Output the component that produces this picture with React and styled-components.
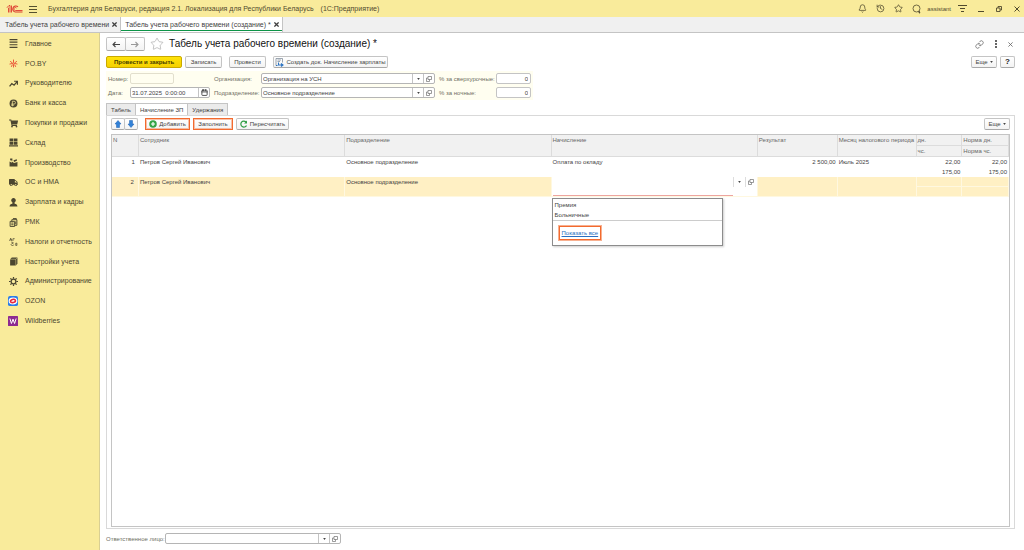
import React from "react";
import styled, { createGlobalStyle, css } from "styled-components";
import { Bell, History, Link, Star, Calendar } from "lucide-react";
import { FaShoppingCart, FaTruck } from "react-icons/fa";

const colors = {
  yellow: "#f9eb9b",
  form: "#fffef0",
  row: "#fff0c4",
  line: "#c4c4c4",
  text: "#3f3f3f",
  label: "#6f6f63",
  orange: "#f26a2e",
  green: "#0c9447",
};

const menu = [
  ["main", "Главное"],
  ["poby", "PO.BY"],
  ["trend", "Руководителю"],
  ["bank", "Банк и касса"],
  ["cart", "Покупки и продажи"],
  ["stock", "Склад"],
  ["factory", "Производство"],
  ["truck", "ОС и НМА"],
  ["person", "Зарплата и кадры"],
  ["rmk", "РМК"],
  ["tax", "Налоги и отчетность"],
  ["books", "Настройки учета"],
  ["gear", "Администрирование"],
  ["ozon", "OZON"],
  ["wb", "Wildberries"],
];

const shapes = {
  main: <path d="M1 0h14v2H1zM1 4.600h14v2H1zM1 9.200h14v2H1zM1 13.800h14v2H1z" />,
  poby: (
    <g stroke="#e8472f" strokeWidth="1.6" fill="none">
      <path d="M8 1v5M8 10v5M2 4l4 3M14 4l-4 3M1 9l5-1M15 9l-5-1M4 14l2-4M12 14l-2-4" />
      <circle cx="8" cy="8" r="1.5" />
    </g>
  ),
  trend: (
    <path
      d="M1 13l4-5 4 3 5-6M9 4h6v6"
      fill="none"
      stroke="currentColor"
      strokeWidth="2.2"
    />
  ),
  bank: (
    <>
      <circle cx="8" cy="8" r="7" />
      <path
        d="M6 13V4h3a2.3 2.3 0 0 1 0 5H4M4 11h5"
        stroke={colors.yellow}
        strokeWidth="1.3"
        fill="none"
      />
    </>
  ),
  stock: <path d="M1 1h6.500v5H1zM8.500 1H15v5H8.500zM1 7h6.500v5H1zM8.500 7H15v5H8.500zM0 13h16v2H0z" />,
  factory: <path d="M1 15V6l4 2.500V6l4 3 6-2v8zM2 1h4v4L2 4zM8 4l6-2v3l-5 2z" />,
  person: <path d="M8 0a4 4 0 0 1 2 7.500V10c3 0 5 2 5 5H1c0-3 2-5 5-5V7.500A4 4 0 0 1 8 0z" />,
  rmk: (
    <g fill="none" stroke="currentColor" strokeWidth="1.7">
      <path d="M2 6h8v9H2zM5 6V3h9v10h-4M7 1h6v2M4 9h4M4 12h4M12 6v5" />
    </g>
  ),
  tax: (
    <g fill="none" stroke="currentColor" strokeWidth="1.3">
      <path d="M1 7l2-5 2 5M2 5h3M7 7V3h3M8 13a2 2 0 1 0 0 1M12 15v-4h2v4h-2M4 9l4 1" />
    </g>
  ),
  books: (
    <>
      <path d="M2 4l3-3h10v11l-3 3H2z" />
      <path d="M2 4h10v11M12 4l3-3" fill="none" stroke={colors.yellow} strokeWidth=".8" />
    </>
  ),
  gear: (
    <g fill="none" stroke="currentColor">
      <circle cx="8" cy="8" r="4.200" strokeWidth="2.2" />
      <path
        d="M8 0v3M8 13v3M0 8h3M13 8h3M2.5 2.5l2 2M11.5 11.5l2 2M13.5 2.5l-2 2M2.5 13.5l2-2"
        strokeWidth="2.2"
      />
    </g>
  ),
  ozon: (
    <>
      <rect width="16" height="16" rx="3" fill="#2b7de9" />
      <ellipse cx="8" cy="8" rx="7" ry="5.5" fill="#fff" />
      <ellipse
        cx="8"
        cy="8"
        rx="4"
        ry="2.500"
        fill="#fff"
        stroke="#e8263c"
        strokeWidth="2.5"
        transform="rotate(-15 8 8)"
      />
    </>
  ),
  wb: (
    <>
      <rect width="16" height="16" rx="1" fill="#8d2a91" />
      <path d="M3 4l2.5 8L8 5l2.5 7L13 4" fill="none" stroke="#fff" strokeWidth="1.6" />
    </>
  ),
};

const MenuIcon = ({ name }) => {
  if (name === "cart") return <FaShoppingCart size={9} />;
  if (name === "truck") return <FaTruck size={9} />;
  const size = name === "ozon" || name === "wb" ? 10 : 9;
  return (
    <svg width={size} height={size} viewBox="0 0 16 16" fill="currentColor">
      {shapes[name]}
    </svg>
  );
};

const Logo = () => (
  <svg width="17" height="10" viewBox="0 0 34 20" fill="none" stroke="#dc3a2e" strokeWidth="2.2">
    <path d="M2 7l4-4h2v14M4 8v-1M11 3v14M5 17V8" strokeWidth="1.8" />
    <path d="M24 6a6 6 0 1 0-5 10h14" />
    <path d="M21 8a3 3 0 1 0-2 5h14" strokeWidth="1.8" />
  </svg>
);

const Burger = () => (
  <svg width="8" height="8" viewBox="0 0 8 8" stroke="#55502f">
    <path d="M0 1.5h8M0 4.5h8M0 7.5h8" />
  </svg>
);

const Loupe = () => (
  <svg width="10" height="10" viewBox="0 0 20 20" fill="none" stroke="currentColor" strokeWidth="1.6">
    <circle cx="9" cy="9" r="7" />
    <path d="M14 14l2 4h-2z" fill="currentColor" />
  </svg>
);

const Filter = () => (
  <svg width="9" height="9" viewBox="0 0 9 9" stroke="currentColor">
    <path d="M0 1.5h9M2 4.5h5M3 7.5h3" />
  </svg>
);

const Cross = ({ size = 5, thick = 1 }) => (
  <svg width={size} height={size} viewBox="0 0 6 6" stroke="currentColor" strokeWidth={thick}>
    <path d="M.5.5l5 5M5.5.5l-5 5" />
  </svg>
);

const Restore = () => (
  <svg width="6" height="6" viewBox="0 0 12 12" fill="none" stroke="currentColor" strokeWidth="1.8">
    <path d="M1 4h7v7H1zM4 4V1h7v7H8" />
  </svg>
);

const Arrow = ({ back }) => (
  <svg width="8" height="7" viewBox="0 0 16 14" fill="none" stroke="currentColor" strokeWidth="2.2">
    <path d={back ? "M16 7H2M7 2L2 7l5 5" : "M0 7h14M9 2l5 5-5 5"} />
  </svg>
);

const MoveArrow = ({ down }) => (
  <svg width="8" height="8" viewBox="0 0 16 16" fill="#3282d8" stroke="#1a5fb0">
    <path d={down ? "M8 15L2 8h3V1h6v7h3z" : "M8 1L2 8h3v7h6V8h3z"} />
  </svg>
);

const Plus = () => (
  <svg width="8" height="8" viewBox="0 0 16 16">
    <circle cx="8" cy="8" r="7.5" fill="#35a545" />
    <path d="M8 4v8M4 8h8" stroke="#fff" strokeWidth="2.4" />
  </svg>
);

const Refresh = () => (
  <svg width="8" height="8" viewBox="0 0 16 16" fill="none" stroke="#2f9e44" strokeWidth="2.4">
    <path d="M13 11a6 6 0 1 1-1-7" />
    <path d="M14 1v6H8z" fill="#2f9e44" stroke="none" />
  </svg>
);

const DocIcon = () => (
  <svg width="9" height="9" viewBox="0 0 18 18" fill="none" stroke="#71808f" strokeWidth="1.4">
    <path d="M2 15V1h13v8M5 4h7M5 7h5" />
    <path d="M2 15h3M7 9v5h8M12 11l4 3-4 3" stroke="#2b73c2" strokeWidth="2.2" />
  </svg>
);

const Open = () => (
  <svg width="6" height="6" viewBox="0 0 12 12" fill="none" stroke="#666" strokeWidth="1.3">
    <path d="M4 1h7v6H4zM4 4H1v7h6V7" />
  </svg>
);

const Caret = () => (
  <svg width="3" height="2" viewBox="0 0 4 3" fill="#444">
    <path d="M0 0h4L2 3z" />
  </svg>
);

const ComboField = ({ id, label, value = "" }) => (
  <>
    <Label htmlFor={id}>{label}</Label>
    <Combo>
      <input id={id} defaultValue={value} />
      <button type="button" aria-label="Выбрать">
        <Caret />
      </button>
      <button type="button" aria-label="Открыть">
        <Open />
      </button>
    </Combo>
  </>
);

const App = () => {
  return (
    <Page>
      <GlobalStyle />
      <TopBar>
        <Logo />
        <Burger />
        <AppTitle>
          Бухгалтерия для Беларуси, редакция 2.1. Локализация для Республики Беларусь
          <span>(1С:Предприятие)</span>
        </AppTitle>
        <Tools>
          <IconButton aria-label="Уведомления">
            <Bell size={9} />
          </IconButton>
          <IconButton aria-label="История">
            <History size={9} />
          </IconButton>
          <IconButton aria-label="Избранное">
            <Star size={9} />
          </IconButton>
          <IconButton aria-label="Поиск">
            <Loupe />
          </IconButton>
          <User>assistant</User>
          <IconButton aria-label="Настройки">
            <Filter />
          </IconButton>
        </Tools>
        <WindowButtons>
          <IconButton aria-label="Свернуть">
            <svg width="6" height="6" viewBox="0 0 6 6" stroke="currentColor">
              <path d="M0 5.5h6" />
            </svg>
          </IconButton>
          <IconButton aria-label="Восстановить">
            <Restore />
          </IconButton>
          <IconButton aria-label="Закрыть">
            <Cross size={6} />
          </IconButton>
        </WindowButtons>
      </TopBar>

      <WindowTabs>
        <WindowTab>
          Табель учета рабочего времени <Cross thick={1.5} />
        </WindowTab>
        <WindowTab $active>
          Табель учета рабочего времени (создание) * <Cross thick={1.5} />
        </WindowTab>
      </WindowTabs>

      <Body>
        <Sidebar>
          <MenuList>
            {menu.map(([icon, title]) => (
              <li key={icon}>
                <MenuLink href="#">
                  <MenuIcon name={icon} />
                  {title}
                </MenuLink>
              </li>
            ))}
          </MenuList>
        </Sidebar>

        <Main>
          <TitleRow>
            <Group>
              <Button aria-label="Назад" $width="20px" $tall>
                <Arrow back />
              </Button>
              <Button aria-label="Вперед" $width="20px" $tall $muted>
                <Arrow />
              </Button>
            </Group>
            <Star size={14} strokeWidth={1} color="#999" />
            <h1>Табель учета рабочего времени (создание) *</h1>
            <TitleTools>
              <Link size={9} />
              <svg width="2" height="8" viewBox="0 0 2 8" fill="currentColor">
                <path d="M0 0h2v2H0zM0 3h2v2H0zM0 6h2v2H0z" />
              </svg>
              <Cross size={5} />
            </TitleTools>
          </TitleRow>

          <CommandBar>
            <Button $primary $width="76px">
              Провести и закрыть
            </Button>
            <Button $width="37px">Записать</Button>
            <Gap />
            <Button $width="37px">Провести</Button>
            <Gap />
            <Button $width="115px">
              <DocIcon />
              Создать док. Начисление зарплаты
            </Button>
            <Spacer />
            <Button $width="26px">
              Еще <Caret />
            </Button>
            <Button $width="15px">
              <b>?</b>
            </Button>
          </CommandBar>

          <Form>
            <Label htmlFor="number">Номер:</Label>
            <NumberInput id="number" disabled />
            <ComboField id="org" label="Организация:" value="Организация на УСН" />
            <Label htmlFor="overtime">% за сверхурочные:</Label>
            <Input id="overtime" defaultValue="0" />
            <Label htmlFor="date">Дата:</Label>
            <Combo>
              <input id="date" defaultValue="31.07.2025  0:00:00" />
              <button type="button" aria-label="Календарь">
                <Calendar size={7} strokeWidth={3} />
              </button>
            </Combo>
            <ComboField id="dep" label="Подразделение:" value="Основное подразделение" />
            <Label htmlFor="night">% за ночные:</Label>
            <Input id="night" defaultValue="0" />
          </Form>

          <Tabs>
            <Tab>Табель</Tab>
            <Tab $active>Начисление ЗП</Tab>
            <Tab>Удержания</Tab>
          </Tabs>

          <Panel>
            <PanelBar>
              <Group>
                <Button aria-label="Вверх" $width="14px">
                  <MoveArrow />
                </Button>
                <Button aria-label="Вниз" $width="14px">
                  <MoveArrow down />
                </Button>
              </Group>
              <Gap />
              <Button $marked $width="45px">
                <Plus />
                Добавить
              </Button>
              <Button $marked $width="40px">
                Заполнить
              </Button>
              <Button $width="53px">
                <Refresh />
                Пересчитать
              </Button>
              <Spacer />
              <Button $width="26px">
                Еще <Caret />
              </Button>
            </PanelBar>

            <TableBox>
              <Table>
                <colgroup>
                  <col width="3%" />
                  <col width="23%" />
                  <col width="23%" />
                  <col width="23%" />
                  <col width="8.9%" />
                  <col width="8.8%" />
                  <col width="5.1%" />
                  <col width="5.2%" />
                </colgroup>
                <thead>
                  <tr>
                    <th rowSpan="2">N</th>
                    <th rowSpan="2">Сотрудник</th>
                    <th rowSpan="2">Подразделение</th>
                    <th rowSpan="2">Начисление</th>
                    <th rowSpan="2">Результат</th>
                    <th rowSpan="2">Месяц налогового периода</th>
                    <th>дн.</th>
                    <th>Норма дн.</th>
                  </tr>
                  <tr>
                    <th>чс.</th>
                    <th>Норма чс.</th>
                  </tr>
                </thead>
                <tbody>
                  <tr>
                    <IndexCell rowSpan="2">1</IndexCell>
                    <td rowSpan="2">Петров Сергей Иванович</td>
                    <td rowSpan="2">Основное подразделение</td>
                    <td rowSpan="2">Оплата по окладу</td>
                    <NumCell rowSpan="2">2 500,00</NumCell>
                    <td rowSpan="2">Июль 2025</td>
                    <NumCell>22,00</NumCell>
                    <NumCell>22,00</NumCell>
                  </tr>
                  <tr>
                    <NumCell>175,00</NumCell>
                    <NumCell>175,00</NumCell>
                  </tr>
                </tbody>
                <SelectedRows>
                  <tr>
                    <IndexCell rowSpan="2">2</IndexCell>
                    <td rowSpan="2">Петров Сергей Иванович</td>
                    <td rowSpan="2">Основное подразделение</td>
                    <EditCell rowSpan="2">
                      <Editor>
                        <input aria-label="Начисление" />
                        <button type="button" aria-label="Выбрать">
                          <Caret />
                        </button>
                        <button type="button" aria-label="Открыть">
                          <Open />
                        </button>
                      </Editor>
                      <Popup>
                        <ul>
                          <li>Премия</li>
                          <li>Больничные</li>
                        </ul>
                        <PopupFooter>
                          <a href="#">Показать все</a>
                        </PopupFooter>
                      </Popup>
                    </EditCell>
                    <td rowSpan="2" />
                    <td rowSpan="2" />
                    <td />
                    <td />
                  </tr>
                  <tr>
                    <td />
                    <td />
                  </tr>
                </SelectedRows>
              </Table>
            </TableBox>
          </Panel>

          <Footer>
            <ComboField id="person" label="Ответственное лицо:" />
          </Footer>
        </Main>
      </Body>
    </Page>
  );
};

const GlobalStyle = createGlobalStyle`
  * {
    box-sizing: border-box;
  }

  body {
    margin: 0;
    font-family: "Liberation Sans", Arial, sans-serif;
    font-size: 6px;
    line-height: 8px;
    color: ${colors.text};
    background: #fff;
  }

  button,
  input {
    font: inherit;
    color: inherit;
    margin: 0;
    padding: 0;
    min-width: 0;
  }

  ul {
    list-style: none;
    margin: 0;
    padding: 0;
  }

  svg {
    flex: none;
  }
`;

const Page = styled.div`
  display: flex;
  flex-direction: column;
  min-height: 100vh;
`;

const TopBar = styled.header`
  display: flex;
  align-items: center;
  gap: 6px;
  height: 17px;
  padding: 0 4px 0 6px;
  background: ${colors.yellow};
  color: #504a2e;
`;

const AppTitle = styled.div`
  flex: 1;
  margin-left: 5px;
  font-size: 7px;
  white-space: nowrap;

  span {
    margin-left: 7px;
  }
`;

const Tools = styled.div`
  display: flex;
  align-items: center;
  gap: 9px;
`;

const WindowButtons = styled.div`
  display: flex;
  align-items: center;
  gap: 12px;
  margin-left: 5px;
`;

const IconButton = styled.button`
  display: flex;
  border: 0;
  background: none;
`;

const User = styled.span`
  margin: 0 -2px 0 -4px;
`;

const WindowTabs = styled.nav`
  display: flex;
  height: 16px;
  background: #f0f0f0;
  border-bottom: 1px solid ${colors.line};
`;

const WindowTab = styled.div`
  display: flex;
  align-items: center;
  gap: 3px;
  padding: 0 3px 0 5px;
  font-size: 7px;
  border-right: 1px solid ${colors.line};
  white-space: nowrap;

  ${({ $active }) =>
    $active &&
    css`
      background: #fff;
      padding-left: 4px;
      box-shadow: inset 0 -1px #fff, inset 0 -2px ${colors.green};
    `}
`;

const Body = styled.div`
  display: flex;
  flex: 1;
`;

const Sidebar = styled.aside`
  width: 100px;
  background: ${colors.yellow};
  border-right: 1px solid #d9cf93;
`;

const MenuList = styled.ul`
  display: grid;
  grid-auto-rows: 1fr;
  height: 297px;
  margin-top: 1px;
`;

const MenuLink = styled.a`
  display: grid;
  grid-template-columns: 10px 1fr;
  justify-items: start;
  align-items: center;
  gap: 7px;
  height: 100%;
  padding-left: 8px;
  color: #4b4630;
  font-size: 7px;
  text-decoration: none;
  white-space: nowrap;

  svg {
    justify-self: center;
  }
`;

const Main = styled.main`
  display: flex;
  flex-direction: column;
  flex: 1;
  min-width: 0;
  padding: 4px 9px 6px 6px;
`;

const TitleRow = styled.div`
  display: flex;
  align-items: center;
  gap: 5px;
  height: 14px;

  h1 {
    margin: 0;
    font-size: 10px;
    line-height: 12px;
    font-weight: normal;
    color: #111;
  }
`;

const TitleTools = styled.div`
  display: flex;
  align-items: center;
  gap: 11px;
  margin-left: auto;
  padding-right: 2px;
  color: #666;
`;

const Group = styled.div`
  display: flex;

  button + button {
    margin-left: -1px;
  }
`;

const Button = styled.button`
  display: flex;
  align-items: center;
  justify-content: center;
  gap: 2px;
  height: ${({ $tall }) => ($tall ? "14px" : "12px")};
  min-width: ${({ $width }) => $width};
  border: 1px solid ${colors.line};
  border-bottom-color: #a8a8a8;
  border-radius: 2px;
  background: linear-gradient(#fff, #f3f3f3);
  color: ${({ $muted }) => ($muted ? "#999" : "#444")};
  white-space: nowrap;

  b {
    font-size: 8px;
    color: #222;
  }

  ${({ $primary }) =>
    $primary &&
    css`
      border-color: #c9a900;
      background: linear-gradient(#ffe30a, #f5d000);
      color: #463c00;
      font-weight: bold;
    `}

  ${({ $marked }) =>
    $marked &&
    css`
      border-color: ${colors.orange};
      border-radius: 0;
      box-shadow: inset 0 0 0 1px ${colors.orange}66;
    `}
`;

const Gap = styled.span`
  width: 1px;
`;

const Spacer = styled.span`
  flex: 1;
`;

const CommandBar = styled.div`
  display: flex;
  align-items: center;
  gap: 3px;
  margin-top: 5px;
`;

const Form = styled.div`
  display: grid;
  grid-template-columns: 18px 80px 43px 174px 53px 35px;
  column-gap: 4px;
  row-gap: 3px;
  align-items: center;
  align-self: flex-start;
  margin-top: 3px;
  padding: 2px;
  background: ${colors.form};
`;

const Label = styled.label`
  color: ${colors.label};
  white-space: nowrap;
`;

const Input = styled.input`
  height: 11px;
  width: 100%;
  padding: 0 2px;
  border: 1px solid ${colors.line};
  border-radius: 2px;
  background: #fff;
  text-align: right;
`;

const NumberInput = styled(Input)`
  width: 44px;
  border-color: #e2dfcd;
  background: ${colors.form};
`;

const Combo = styled.div`
  display: flex;
  height: 11px;
  border: 1px solid #b5b5b5;
  border-radius: 2px;
  background: #fff;

  input {
    flex: 1;
    padding-left: 1px;
    border: 0;
    background: none;
    white-space: pre;
  }

  button {
    display: flex;
    align-items: center;
    justify-content: center;
    width: 11px;
    border: 0;
    border-left: 1px solid ${colors.line};
    background: none;
  }
`;

const Tabs = styled.div`
  display: flex;
  margin-top: 3px;
`;

const Tab = styled.button`
  height: 12px;
  padding: 0 4px;
  border: 1px solid ${colors.line};
  border-bottom: 0;
  background: ${({ $active }) => ($active ? "#fff" : "#ebebeb")};

  & + & {
    border-left: 0;
  }
`;

const Panel = styled.section`
  display: flex;
  flex-direction: column;
  flex: 1;
  padding: 2px 4px 1px;
  border: 1px solid #d9d9d9;
`;

const PanelBar = styled.div`
  display: flex;
  align-items: center;
  gap: 3px;
`;

const TableBox = styled.div`
  flex: 1;
  margin-top: 4px;
  border: 1px solid ${colors.line};
`;

const Table = styled.table`
  width: 100%;
  table-layout: fixed;
  border-collapse: separate;
  border-spacing: 0;

  tr {
    height: 10px;
  }

  th,
  td {
    padding: 1px 2px 1px 1px;
    text-align: left;
    vertical-align: top;
    font-weight: normal;
    white-space: nowrap;
  }

  th {
    height: 11px;
    background: #f1f1f1;
    border-right: 1px solid #dcdcdc;
    border-bottom: 1px solid #dcdcdc;
    color: #666;
  }
`;

const NumCell = styled.td`
  && {
    text-align: right;
  }
`;

const IndexCell = styled(NumCell)`
  && {
    padding-right: 4px;
  }
`;

const SelectedRows = styled.tbody`
  td {
    background: ${colors.row};
    border-right: 1px solid #fff8e0;
    border-bottom: 1px solid #fff8e0;
  }
`;

const EditCell = styled.td`
  position: relative;

  && {
    padding: 0;
    background: #fff;
  }
`;

const Editor = styled.div`
  display: flex;
  align-items: flex-start;

  input {
    flex: 1;
    height: 19px;
    margin-left: 1px;
    border: 0;
    border-bottom: 1px solid #eda5a0;
    outline: 0;
  }

  button {
    display: flex;
    align-items: center;
    justify-content: center;
    width: 12px;
    height: 10px;
    border: 0;
    border-left: 1px solid #ddd;
    background: none;
  }
`;

const Popup = styled.div`
  position: absolute;
  top: 100%;
  left: 0;
  width: 171px;
  margin-top: 2px;
  border: 1px solid #8c8c8c;
  background: #fff;
  box-shadow: 1px 1px 2px #0003;

  ul {
    padding: 1px 2px 0;
    border-bottom: 1px solid #ccc;
  }

  li {
    line-height: 10px;
  }
`;

const PopupFooter = styled.div`
  display: flex;
  padding: 5px 6px;

  a {
    padding: 2px;
    border: 1px solid ${colors.orange};
    box-shadow: 0 0 0 1px ${colors.orange}88;
    color: #2a6fc0;
  }
`;

const Footer = styled.div`
  display: grid;
  grid-template-columns: 57px 176px;
  gap: 2px;
  align-items: center;
  margin-top: 4px;
`;

export default App;
